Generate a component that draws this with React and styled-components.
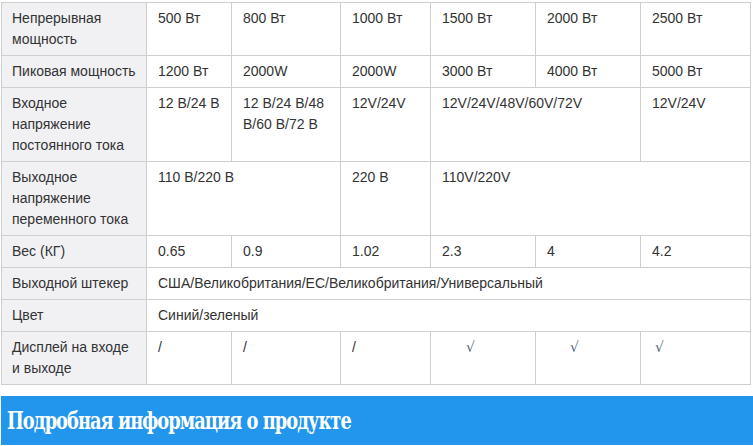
import styled, { createGlobalStyle } from 'styled-components';

const GlobalStyle = createGlobalStyle`
  body {
    margin: 0;
    background: #fff;
    font-family: "Liberation Sans", Arial, sans-serif;
  }
`;

const Page = styled.div`
  padding: 2px 0 0 1px;
  width: 752px;
`;

const SpecTable = styled.table`
  width: 749px;
  border-collapse: collapse;
  table-layout: fixed;
  font-size: 14px;
  line-height: 21px;
  color: #333;
`;

const Label = styled.th`
  text-align: left;
  font-weight: normal;
  vertical-align: top;
  padding: 5px 10px;
  background: #f1f1f4;
  border: 1px solid #cfcfcf;
`;

const Cell = styled.td`
  vertical-align: top;
  padding: 5px 10px 5px ${(p) => p.$indent || 11}px;
  border: 1px solid #cfcfcf;
`;

const Check = styled.span`
  font-family: "DejaVu Serif", serif;
  font-size: 14px;
  color: #55677f;
`;

const Banner = styled.h2`
  margin: 11px 0 0;
  padding: 0 6px;
  height: 49px;
  display: flex;
  align-items: center;
  background: #2196ec;
  color: #fff;
  font-family: "DejaVu Serif Condensed", "DejaVu Serif", serif;
  font-stretch: condensed;
  font-size: 25px;
  font-weight: bold;
  letter-spacing: -1.2px;
  white-space: nowrap;
`;

const BannerText = styled.span`
  display: inline-block;
  transform: scaleX(0.79);
  transform-origin: left center;
`;

const cols = [145, 85, 109, 90, 105, 105, 110];

export default function App() {
  return (
    <Page>
      <GlobalStyle />
      <SpecTable>
        <colgroup>
          {cols.map((w, i) => (
            <col key={i} style={{ width: w }} />
          ))}
        </colgroup>
        <tbody>
          <tr>
            <Label>Непрерывная мощность</Label>
            <Cell>500 Вт</Cell>
            <Cell>800 Вт</Cell>
            <Cell>1000 Вт</Cell>
            <Cell>1500 Вт</Cell>
            <Cell>2000 Вт</Cell>
            <Cell>2500 Вт</Cell>
          </tr>
          <tr>
            <Label>Пиковая мощность</Label>
            <Cell>1200 Вт</Cell>
            <Cell>2000W</Cell>
            <Cell>2000W</Cell>
            <Cell>3000 Вт</Cell>
            <Cell>4000 Вт</Cell>
            <Cell>5000 Вт</Cell>
          </tr>
          <tr>
            <Label>Входное напряжение постоянного тока</Label>
            <Cell>12 В/24 В</Cell>
            <Cell>12 В/24 В/48 В/60 В/72 В</Cell>
            <Cell>12V/24V</Cell>
            <Cell colSpan={2}>12V/24V/48V/60V/72V</Cell>
            <Cell>12V/24V</Cell>
          </tr>
          <tr>
            <Label>Выходное напряжение переменного тока</Label>
            <Cell colSpan={2}>110 В/220 В</Cell>
            <Cell>220 В</Cell>
            <Cell colSpan={3}>110V/220V</Cell>
          </tr>
          <tr>
            <Label>Вес (КГ)</Label>
            <Cell>0.65</Cell>
            <Cell>0.9</Cell>
            <Cell>1.02</Cell>
            <Cell>2.3</Cell>
            <Cell>4</Cell>
            <Cell>4.2</Cell>
          </tr>
          <tr>
            <Label>Выходной штекер</Label>
            <Cell colSpan={6}>США/Великобритания/ЕС/Великобритания/Универсальный</Cell>
          </tr>
          <tr>
            <Label>Цвет</Label>
            <Cell colSpan={6}>Синий/зеленый</Cell>
          </tr>
          <tr>
            <Label>Дисплей на входе и выходе</Label>
            <Cell>/</Cell>
            <Cell>/</Cell>
            <Cell>/</Cell>
            <Cell $indent={35}><Check>√</Check></Cell>
            <Cell $indent={34}><Check>√</Check></Cell>
            <Cell $indent={14}><Check>√</Check></Cell>
          </tr>
        </tbody>
      </SpecTable>
      <Banner>
        <BannerText>Подробная информация о продукте</BannerText>
      </Banner>
    </Page>
  );
}
